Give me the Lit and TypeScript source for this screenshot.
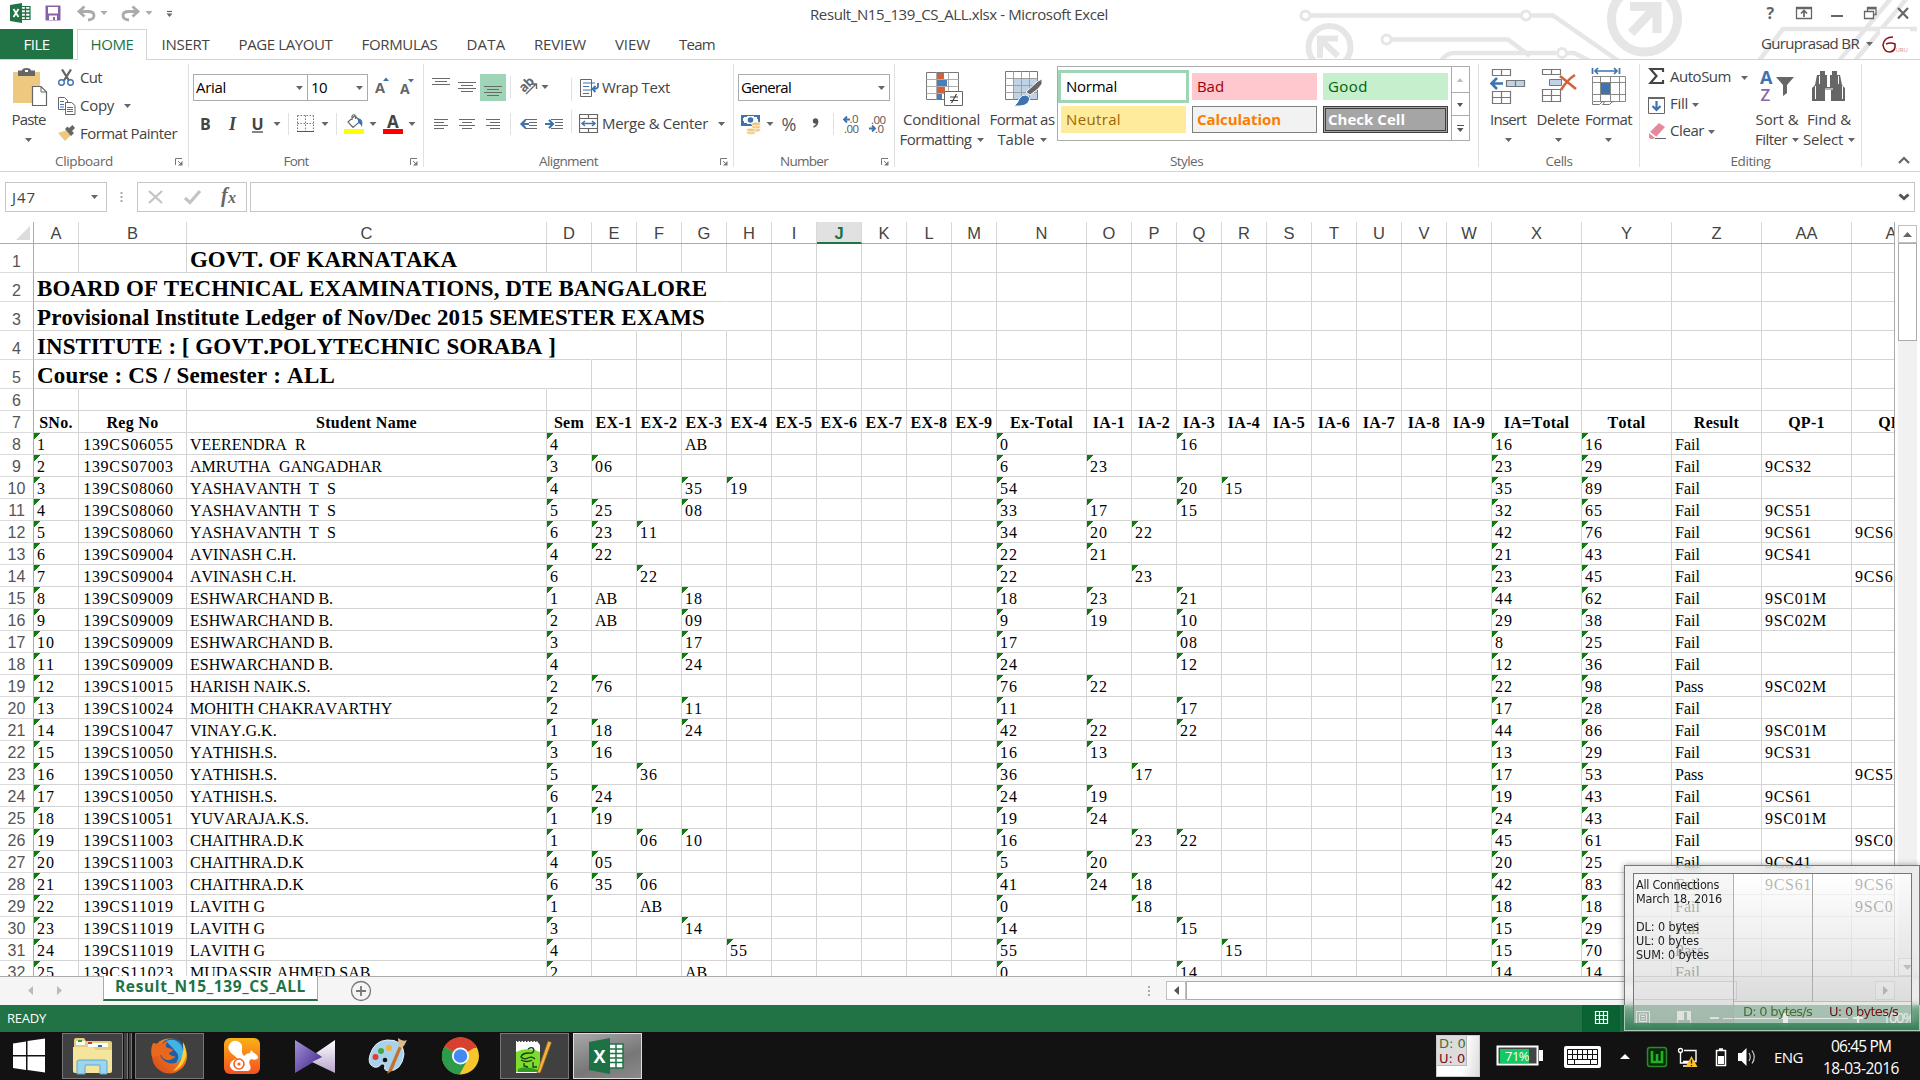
import { LitElement, html, svg, css, nothing } from "lit";
import { customElement, property } from "lit/decorators.js";

/** Single-line label that spreads its letters so the text spans `w` pixels. */
@customElement("fit-label")
class FitLabel extends LitElement {
  @property({ type: Number }) w = 0;
  static styles = css`
    :host { display: inline-block; white-space: pre; }
  `;
  render() {
    return html`<slot></slot>`;
  }
  firstUpdated() {
    const n = (this.textContent ?? "").length;
    const natural = this.getBoundingClientRect().width;
    if (this.w && n) this.style.letterSpacing = `${((this.w - natural) / n).toFixed(3)}px`;
  }
}

const t = (text: string, w: number) => html`<fit-label .w=${w}>${text}</fit-label>`;

/** Icon whose drawing uses window coordinates; x/y is the top-left corner of the box. */
const ic = (x: number, y: number, w: number, h: number, body: unknown) =>
  html`<svg class="ic" width=${w} height=${h} viewBox="${x} ${y} ${w} ${h}">${body}</svg>`;

const dd = () => html`<svg class="ic" width="7" height="4" viewBox="0 0 7 4"><path d="M0 0h7L3.5 4z" fill="#666" /></svg>`;
const tri = (x: number, y: number, c = "#666") => svg`<path d="M${x - 3.5} ${y - 2}h7l-3.5 4z" fill=${c} />`;
const hl = (rows: number[][], c = "#6a6a6a") =>
  svg`<path fill="none" stroke=${c} stroke-width="1.2" d=${rows.map(([x1, x2, y]) => `M${x1} ${y + 0.5}H${x2}`).join("")} />`;

const COLS: [string, number][] = [
  ["A", 45], ["B", 108], ["C", 360], ["D", 45], ["E", 45], ["F", 45], ["G", 45], ["H", 45], ["I", 45], ["J", 45],
  ["K", 45], ["L", 45], ["M", 45], ["N", 90], ["O", 45], ["P", 45], ["Q", 45], ["R", 45], ["S", 45], ["T", 45],
  ["U", 45], ["V", 45], ["W", 45], ["X", 90], ["Y", 90], ["Z", 90], ["AA", 90], ["AB", 90],
];

const TITLES: { row: number; col: string; text: string; w: number; spill: string }[] = [
  { row: 1, col: "C", text: "GOVT. OF KARNATAKA", w: 267, spill: "" },
  { row: 2, col: "A", text: "BOARD OF TECHNICAL EXAMINATIONS, DTE BANGALORE", w: 670, spill: "ABCDEFG" },
  { row: 3, col: "A", text: "Provisional Institute Ledger of Nov/Dec 2015 SEMESTER EXAMS", w: 668, spill: "ABCDEFG" },
  { row: 4, col: "A", text: "INSTITUTE : [ GOVT.POLYTECHNIC SORABA ]", w: 519, spill: "ABCD" },
  { row: 5, col: "A", text: "Course : CS / Semester : ALL", w: 298, spill: "ABC" },
];

const HEADS: Record<string, string> = {
  A: "SNo.", B: "Reg No", C: "Student Name", D: "Sem", E: "EX-1", F: "EX-2", G: "EX-3", H: "EX-4", I: "EX-5",
  J: "EX-6", K: "EX-7", L: "EX-8", M: "EX-9", N: "Ex-Total", O: "IA-1", P: "IA-2", Q: "IA-3", R: "IA-4", S: "IA-5",
  T: "IA-6", U: "IA-7", V: "IA-8", W: "IA-9", X: "IA=Total", Y: "Total", Z: "Result", AA: "QP-1", AB: "QP-2",
};

const ROWS: Record<string, string>[] = [
  "139CS06055|VEERENDRA  R|4|G:AB|N:0|Q:16|X:16|Y:16|Z:Fail",
  "139CS07003|AMRUTHA  GANGADHAR|3|E:06|N:6|O:23|X:23|Y:29|Z:Fail|AA:9CS32",
  "139CS08060|YASHAVANTH  T  S|4|G:35|H:19|N:54|Q:20|R:15|X:35|Y:89|Z:Fail",
  "139CS08060|YASHAVANTH  T  S|5|E:25|G:08|N:33|O:17|Q:15|X:32|Y:65|Z:Fail|AA:9CS51",
  "139CS08060|YASHAVANTH  T  S|6|E:23|F:11|N:34|O:20|P:22|X:42|Y:76|Z:Fail|AA:9CS61|AB:9CS62",
  "139CS09004|AVINASH C.H.|4|E:22|N:22|O:21|X:21|Y:43|Z:Fail|AA:9CS41",
  "139CS09004|AVINASH C.H.|6|F:22|N:22|P:23|X:23|Y:45|Z:Fail|AB:9CS62",
  "139CS09009|ESHWARCHAND B.|1|E:AB|G:18|N:18|O:23|Q:21|X:44|Y:62|Z:Fail|AA:9SC01M",
  "139CS09009|ESHWARCHAND B.|2|E:AB|G:09|N:9|O:19|Q:10|X:29|Y:38|Z:Fail|AA:9SC02M",
  "139CS09009|ESHWARCHAND B.|3|G:17|N:17|Q:08|X:8|Y:25|Z:Fail",
  "139CS09009|ESHWARCHAND B.|4|G:24|N:24|Q:12|X:12|Y:36|Z:Fail",
  "139CS10015|HARISH NAIK.S.|2|E:76|N:76|O:22|X:22|Y:98|Z:Pass|AA:9SC02M",
  "139CS10024|MOHITH CHAKRAVARTHY|2|G:11|N:11|Q:17|X:17|Y:28|Z:Fail",
  "139CS10047|VINAY.G.K.|1|E:18|G:24|N:42|O:22|Q:22|X:44|Y:86|Z:Fail|AA:9SC01M",
  "139CS10050|YATHISH.S.|3|E:16|N:16|O:13|X:13|Y:29|Z:Fail|AA:9CS31",
  "139CS10050|YATHISH.S.|5|F:36|N:36|P:17|X:17|Y:53|Z:Pass|AB:9CS52",
  "139CS10050|YATHISH.S.|6|E:24|N:24|O:19|X:19|Y:43|Z:Fail|AA:9CS61",
  "139CS10051|YUVARAJA.K.S.|1|E:19|N:19|O:24|X:24|Y:43|Z:Fail|AA:9SC01M",
  "139CS11003|CHAITHRA.D.K|1|F:06|G:10|N:16|P:23|Q:22|X:45|Y:61|Z:Fail|AB:9SC02",
  "139CS11003|CHAITHRA.D.K|4|E:05|N:5|O:20|X:20|Y:25|Z:Fail|AA:9CS41",
  "139CS11003|CHAITHRA.D.K|6|E:35|F:06|N:41|O:24|P:18|X:42|Y:83|Z:Fail|AA:9CS61|AB:9CS62",
  "139CS11019|LAVITH G|1|F:AB|N:0|P:18|X:18|Y:18|Z:Fail|AB:9SC02",
  "139CS11019|LAVITH G|3|G:14|N:14|Q:15|X:15|Y:29|Z:Fail",
  "139CS11019|LAVITH G|4|H:55|N:55|R:15|X:15|Y:70|Z:Pass",
  "139CS11023|MUDASSIR AHMED SAB|2|G:AB|N:0|Q:14|X:14|Y:14|Z:Fail",
].map((line, i) => {
  const [reg, name, sem, ...rest] = line.split("|");
  const row: Record<string, string> = { A: String(i + 1), B: reg, C: name, D: sem };
  for (const part of rest) {
    const [k, v] = part.split(":");
    row[k] = v;
  }
  return row;
});

@customElement("xl-sheet")
class XlSheet extends LitElement {
  static styles = css`
    :host { display: block; width: 1895px; height: 754px; overflow: hidden; border-right: 1px solid #ababab; font: 16px "Liberation Serif", serif; font-kerning: none; color: #000; box-sizing: border-box; }
    .row { display: flex; width: 1990px; height: 22px; }
    .tall { height: 29px; }
    .heads { font: 16.5px/22px "Liberation Sans", Arial, sans-serif; color: #444; border-bottom: 1px solid #ababab; height: 21px; box-sizing: content-box; }
    .col, .num, .cell { box-sizing: border-box; flex: none; overflow: hidden; }
    .col { text-align: center; border-right: 1px solid #d8d8d8; }
    .corner { width: 34px; flex: none; border-right: 1px solid #ababab; box-sizing: border-box; display: flex; align-items: flex-end; justify-content: flex-end; padding: 0 3px 3px 0; }
    .sel { background: #e1e1e1; color: #217346; font-weight: bold; height: 22px; border-bottom: 2px solid #217346; }
    .num { width: 34px; font: 16px/23px "Liberation Sans", Arial, sans-serif; color: #555; text-align: center; border-right: 1px solid #ababab; border-bottom: 1px solid #dcdcdc; }
    .tall .num { line-height: 35px; }
    .cell { border-right: 1px solid #d4d4d4; border-bottom: 1px solid #d4d4d4; line-height: 23px; padding-left: 3px; white-space: pre; }
    .digits { letter-spacing: 0.9px; }
    .code { letter-spacing: 0.7px; }
    .mid { text-align: center; padding: 0 8px 0 0; }
    .bold { font-weight: bold; letter-spacing: 0.3px; text-align: center; padding-left: 0; }
    .flag { background: linear-gradient(135deg, #107c10 0 4.7px, transparent 4.900px) no-repeat; }
    .open { border-right-color: transparent; }
    .title { font-weight: bold; font-size: 23px; line-height: 32px; overflow: visible; }
  `;

  private cell(col: string, w: number, cls: string, content: unknown) {
    return html`<div class="cell ${cls}" style="width:${w}px">${content}</div>`;
  }

  private dataCell(col: string, w: number, v: string | undefined) {
    if (v === undefined) return this.cell(col, w, "", nothing);
    const numeric = /^\d+$/.test(v);
    const cls = numeric ? "digits flag" : col === "B" ? "code mid" : col.startsWith("A") ? "code" : "";
    return this.cell(col, w, cls, v);
  }

  render() {
    return html`
      <div class="row heads">
        <div class="corner"><svg width="14" height="14" viewBox="0 0 14 14"><path d="M14 0v14H0z" fill="#dcdcdc" /></svg></div>
        ${COLS.map(([c, w]) => html`<div class="col ${c === "J" ? "sel" : ""}" style="width:${w}px">${c}</div>`)}
      </div>
      ${TITLES.map(
        (d) => html`<div class="row tall"><div class="num">${d.row}</div>${COLS.map(([c, w]) =>
          this.cell(c, w, (d.col === c ? "title " : "") + (d.spill.includes(c) && c.length === 1 ? "open" : ""),
            d.col === c ? t(d.text, d.w) : nothing))}</div>`
      )}
      <div class="row"><div class="num">6</div>${COLS.map(([c, w]) => this.cell(c, w, "", nothing))}</div>
      <div class="row"><div class="num">7</div>${COLS.map(([c, w]) => this.cell(c, w, "bold", HEADS[c]))}</div>
      ${ROWS.map(
        (r, i) => html`<div class="row"><div class="num">${i + 8}</div>${COLS.map(([c, w]) => this.dataCell(c, w, r[c]))}</div>`
      )}
    `;
  }
}

const launcher = html`<svg class="launch" width="8" height="8" viewBox="0 0 8 8"><path d="M.5 7V.5H7M3 3l3.500 3.500" fill="none" stroke="#777" /><path d="M7.500 3v4.500H3z" fill="#777" /></svg>`;

const group = (w: number, label: string, lw: number, hasLauncher: boolean, body: unknown) => html`
  <section class="group" style="width:${w}px">
    <div class="body">${body}</div>
    <div class="caption"><span class="capname">${t(label, lw)}</span>${hasLauncher ? launcher : nothing}</div>
  </section>`;

const big = (w: number, icon: unknown, l1: string, w1: number, l2 = "", w2 = 0) => html`
  <div class="big" style="width:${w}px">
    ${icon}
    <div class="bl">${t(l1, w1)}</div>
    <div class="bl">${l2 ? t(l2, w2) : nothing}${dd()}</div>
  </div>`;

const sheetIcon = (x: number, y: number) => svg`
  <path d="M${x} ${y + 2}l12-2v20l-12-2z" fill="#217346" />
  <path d="M${x + 12} ${y + 3.500}h8v13h-8" fill="#fff" stroke="#217346" stroke-width="1.200" />
  <path d="M${x + 12} ${y + 6.500}h8M${x + 12} ${y + 10}h8M${x + 12} ${y + 13.500}h8M${x + 15.500} ${y + 4}v12" stroke="#217346" stroke-width="1.300" />
  <path d="M${x + 3.500} ${y + 6}l5 8M${x + 8.500} ${y + 6}l-5 8" stroke="#fff" stroke-width="1.800" />`;

@customElement("app-root")
class AppRoot extends LitElement {
  static styles = css`
    :host { display: block; position: relative; width: 1920px; height: 1080px; overflow: hidden; background: #fff; color: #444; font: 15px "Open Sans", "Noto Sans", sans-serif; }
    svg { display: block; flex: none; }
    .deco { position: absolute; left: 1290px; top: 0; }
    .titlebar { height: 29px; display: flex; position: relative; }
    .qat { width: 480px; flex: none; }
    .doctitle { flex: 1; text-align: center; line-height: 28px; padding-right: 322px; }
    .tabs { height: 31px; display: flex; position: relative; border-bottom: 1px solid #d4d4d4; box-sizing: border-box; line-height: 30px; text-align: center; }
    .file { width: 73px; background: #217346; color: #fff; }
    .home { width: 70px; height: 31px; margin-left: 4px; box-sizing: border-box; border: 1px solid #d4d4d4; border-bottom: 0; background: #fff; color: #217346; line-height: 29px; }
    .user { margin-left: auto; display: flex; align-items: center; gap: 7px; padding-right: 10px; line-height: 27px; }
    .user fit-label { margin-top: -2px; }
    .ribbon { height: 112px; display: flex; border-bottom: 1px solid #d4d4d4; box-sizing: border-box; position: relative; background: #fff; }
    .group { margin-top: 4px; height: 103px; box-sizing: border-box; border-right: 1px solid #e1e1e1; flex: none; }
    .body { height: 87px; display: flex; }
    .group + .group .body { margin-left: -1px; }
    .caption { height: 16px; display: flex; line-height: 20px; font-size: 13.5px; color: #666; }
    .capname { flex: 1; text-align: center; }
    .launch { margin: 7px 5px 0 7px; }
    .big { display: flex; flex-direction: column; align-items: center; text-align: center; flex: none; }
    .bl { height: 20px; line-height: 18px; display: flex; align-items: center; justify-content: center; gap: 5px; }
    .bl fit-label { margin-top: -2px; }
    .stack { display: flex; flex-direction: column; padding-left: 1px; }
    .line { display: flex; align-items: center; height: 28px; gap: 4px; }
    .line fit-label { margin-top: -3px; }
    .edits { padding-left: 1px; width: 112px; }
    .edits .line { height: 27px; }
    .copydd { margin-left: 6px; display: flex; }
    .rows { display: flex; flex-direction: column; }
    .r1 { display: flex; height: 27px; margin-top: 10px; }
    .r2 { display: flex; height: 27px; margin-top: 9px; }
    .combo { box-sizing: border-box; border: 1px solid #ababab; height: 27px; display: flex; align-items: center; justify-content: space-between; padding: 0 4px 0 2px; color: #000; background: #fff; }
    .combo fit-label { margin-top: -2px; }
    .cfont { width: 115px; margin-left: 5px; }
    .csize { width: 60px; border-left: 0; padding-left: 3px; }
    .cnum { width: 152px; margin-left: 5px; }
    .btntext { display: flex; align-items: center; gap: 3px; }
    .btntext fit-label { margin-top: -2px; }
    .tail { margin-left: 7px; display: flex; }
    .gap { flex: none; }
    .gallery { box-sizing: border-box; width: 413px; height: 75px; margin-top: 2px; border: 1px solid #ababab; display: flex; justify-content: space-between; }
    .styles { display: grid; grid-template-columns: 125px 125px 125px; grid-template-rows: 27px 27px; gap: 6px; padding: 6px 0 0 3px; }
    .st { box-sizing: border-box; line-height: 26px; padding-left: 5px; }
    .normal { color: #000; background: #fff; outline: 3px solid #9fd5b7; }
    .bad { background: #ffc7ce; color: #9c0006; }
    .good { background: #c6efce; color: #006100; }
    .neutral { background: #ffeb9c; color: #9c6500; }
    .calc { background: #f2f2f2; color: #fa7d00; font-weight: bold; border: 1px solid #7f7f7f; line-height: 25px; padding-left: 4px; }
    .check { background: #a5a5a5; color: #fff; font-weight: bold; border: 3px double #3f3f3f; line-height: 21px; padding-left: 2px; }
    .gscroll { width: 17px; border-left: 1px solid #ababab; display: flex; flex-direction: column; }
    .gscroll svg + svg { border-top: 1px solid #ababab; }
    .collapse { margin: 96px 0 0 36px; }
    .fbar { display: flex; height: 50px; box-sizing: border-box; padding-top: 10px; }
    .fbox { box-sizing: border-box; height: 30px; border: 1px solid #c6c6c6; display: flex; align-items: center; justify-content: space-between; background: #fff; }
    .name { width: 102px; margin-left: 5px; padding: 0 8px 0 6px; }
    .fx { width: 110px; }
    .input { width: 1665px; margin-left: 3px; justify-content: flex-end; }
    .main { display: flex; height: 754px; }
    .vscroll { width: 19px; margin-left: 3px; padding-top: 3px; display: flex; flex-direction: column; box-sizing: border-box; }
    .sbtn { box-sizing: border-box; border: 1px solid #c0c0c0; background: #fff; width: 19px; height: 18px; display: flex; align-items: center; justify-content: center; }
    .vthumb { box-sizing: border-box; border: 1px solid #ababab; background: #fff; height: 98px; }
    .vtrack { flex: 1; background: #f1f1f1; }
    .tabbar { height: 29px; box-sizing: border-box; border-top: 1px solid #ababab; background: #f5f5f5; display: flex; }
    .nav { width: 103px; height: 28px; }
    .sheettab { width: 215px; height: 25px; box-sizing: border-box; margin-top: -1px; background: #fff; border: 1px solid #ababab; border-top: 0; border-bottom: 2px solid #217346; color: #217346; font-weight: bold; line-height: 21px; text-align: center; font-size: 15.5px; }
    .hscroll { margin-left: auto; display: flex; height: 19px; margin-top: 4px; margin-right: 25px; }
    .hbtn { width: 20px; height: 19px; }
    .hthumb { box-sizing: border-box; width: 551px; border: 1px solid #ababab; background: #fff; }
    .htrack { width: 138px; background: #f1f1f1; }
    .status { height: 27px; background: #217346; color: #fff; display: flex; justify-content: space-between; line-height: 26px; padding-left: 7px; font-size: 13px; }
    .zoom { display: flex; margin-right: 2px; }
    .pct { color: #fff; font-size: 14px; width: 40px; line-height: 26px; text-align: center; }
    .taskbar { height: 48px; background: #121212; display: flex; }
    .app { box-sizing: border-box; height: 46px; margin-top: 1px; border: 1px solid #777; background: #404040; }
    .active { background: linear-gradient(160deg, #a8a8a8, #777 60%, #8a8a8a); border-color: #ddd; }
    .multi { height: 46px; margin-top: 1px; width: 3px; border-right: 1px solid #777; background: #404040; margin-left: 1px; }
    .meter { box-sizing: border-box; width: 44px; height: 42px; margin-top: 3px; background: linear-gradient(100deg, #fff 60%, #ddd); border: 1px solid #ccc; }
    .meterin { width: 30px; height: 30px; background: #dcdcdc; border: 1px solid #b8b8b8; border-width: 0 1px 1px 0; font: 13px/15px "DejaVu Sans", sans-serif; padding-left: 2px; box-sizing: border-box; white-space: nowrap; color: #4d6b36; }
    .up { color: #7a0d16; }
    .tray { margin-left: auto; display: flex; color: #fff; }
    .eng { line-height: 50px; margin-left: 14px; }
    .clock { width: 98px; margin-left: 9px; text-align: center; line-height: 22px; padding-top: 3px; font-size: 15.5px; }
    .glass { position: absolute; left: 1624px; top: 865px; width: 296px; height: 166px; box-sizing: border-box; border: 1px solid #777; background: rgba(225, 228, 226, 0.55); box-shadow: 0 0 6px rgba(0, 0, 0, 0.350); backdrop-filter: blur(3px); clip-path: polygon(evenodd, -8px -8px, 304px -8px, 304px 174px, -8px 174px, -8px -8px, 9px 8px, 287px 8px, 287px 158px, 9px 158px, 9px 8px); }
    .glassline { position: absolute; left: 1624px; top: 1005px; width: 296px; height: 26px; box-sizing: border-box; border: 1px solid #a9cbb7; border-top: 0; background: linear-gradient(rgba(33, 115, 70, 0.1), rgba(33, 115, 70, 0.8)); clip-path: polygon(0 0, 9px 0, 9px 18px, 287px 18px, 287px 0, 100% 0, 100% 100%, 0 100%); }
    .widget { position: absolute; left: 1633px; top: 873px; width: 279px; height: 151px; box-sizing: border-box; border: 1px solid #777; display: flex; font: 13px/14px "DejaVu Sans", sans-serif; color: #222; }
    .info { width: 100px; background: linear-gradient(rgba(244, 244, 244, 0.72), rgba(212, 212, 212, 0.72)); border-right: 1px solid #b0b0b0; box-sizing: border-box; padding: 4px 0 0 2px; white-space: nowrap; font: 12.5px/14px "DejaVu Sans Condensed", "DejaVu Sans", sans-serif; }
    .info p { margin: 0; height: 14px; }
    .info .sp { height: 28px; }
    .speeds { flex: 1; display: flex; flex-direction: column; }
    .charts { display: flex; height: 127px; background: linear-gradient(rgba(255, 255, 255, 0.72), rgba(212, 212, 212, 0.72)); }
    .chart { flex: 1; border-left: 1px solid #aaa; }
    .charts div:first-child { width: 78px; }
    .rates { flex: 1; border-top: 1px solid #bbb; background: rgba(222, 226, 222, 0.7); display: flex; line-height: 19px; padding-left: 9px; gap: 17px; color: #4d6b36; }
  `;

  private deco() {
    return html`<svg class="deco" width="630" height="59" viewBox="1290 0 630 59">
      <g fill="none" stroke="#e6e6e6" stroke-width="4.500">
        <path d="M1311 15.500H1521M1532 15.500H1553L1620 62M1392 39.500H1508L1530 56M1440 62Q1446 53 1454 53H1556M1567 53H1574L1592 62M1758 62L1783 29H1917M1838 62L1892 -3M1854 62L1908 -3" />
        <circle cx="1305.500" cy="15.500" r="4.500" stroke-width="3" /><circle cx="1526" cy="15.500" r="4.500" stroke-width="3" />
        <circle cx="1386.500" cy="39.500" r="4.500" stroke-width="3" /><circle cx="1562" cy="53" r="4.500" stroke-width="3" />
        <circle cx="1329.500" cy="47" r="21" stroke-width="6" />
        <circle cx="1644.500" cy="19" r="33" stroke-width="9" />
        <path d="M1320 58V38.500H1338M1321 40L1338 56" stroke-width="6" />
        <path d="M1630 6.500H1657V33M1656 7L1631 33" stroke-width="9" />
      </g>
    </svg>`;
  }

  private title() {
    return html`<div class="titlebar">
      <div class="qat">${ic(0, 0, 480, 29, svg`
        ${sheetIcon(10, 3)}
        <path d="M45.500 5.500h15v15h-15z" fill="#8660a9" /><path d="M48 7h10v6.500H48z" fill="#fff" /><path d="M49 15.500h8V20h-2v-3h-2v3h-4z" fill="#fff" />
        <g fill="none" stroke="#ababab" stroke-width="2.800"><path d="M80 11.500h8q6 0 6 4t-6 4.500" /><path d="M84.500 6.500l-5.500 5 5.500 5" />
        <path d="M137 11.500h-8q-6 0-6 4t6 4.500" /><path d="M132.500 6.500l5.500 5-5.500 5" /></g>
        ${tri(104, 13, "#ababab")}${tri(149, 13, "#ababab")}
        <path d="M167 11.500h5" stroke="#666" stroke-width="1.200" /><path d="M166.500 13.500h6l-3 3.500z" fill="#666" />`)}</div>
      <div class="doctitle">${t("Result_N15_139_CS_ALL.xlsx - Microsoft Excel", 298)}</div>
      ${ic(1760, 0, 160, 29, svg`<g fill="none" stroke="#666" stroke-width="1.800">
        <text x="1766.500" y="19" font-size="16" font-weight="bold" fill="#666" stroke="none">?</text>
        <path d="M1796.500 7.500h15v11h-15z" stroke-width="1.300" /><path d="M1796 8.500h16" stroke-width="1.500" /><path d="M1804 17v-6M1801 13.500l3-3 3 3" stroke-width="1.700" />
        <path d="M1831 16h12" stroke-width="2" />
        <path d="M1864.500 11.500h9v7h-9zM1867.500 11V7.500h8.500v7h-2.500" stroke-width="1.300" /><path d="M1867 8.500h9" />
        <path d="M1898 8l10 10.500M1908 8l-10 10.500" stroke-width="2.200" /></g>`)}
    </div>`;
  }

  private tabs() {
    const tab = (label: string, w: number, box: number) => html`<div style="width:${box}px">${t(label, w)}</div>`;
    return html`<div class="tabs">
      <div class="file">${t("FILE", 26)}</div>
      <div class="home">${t("HOME", 43)}</div>
      ${tab("INSERT", 48, 77)}${tab("PAGE LAYOUT", 94, 123)}${tab("FORMULAS", 76, 105)}${tab("DATA", 39, 68)}${tab("REVIEW", 52, 80)}${tab("VIEW", 35, 65)}${tab("Team", 36, 64)}
      <div class="user">${t("Guruprasad BR", 98)}${dd()}${ic(1880, 29, 30, 30, svg`<path d="M1880 29h30v30h-30z" fill="#fff" />
        <path d="M1893 37q-9 0-10 8 1 7 7 7 6-1 5-8-4-2-9 0" fill="none" stroke="#8c1418" stroke-width="1.600" /><text x="1895.500" y="52" font-size="6" fill="#d88">URU</text>`)}</div>
    </div>`;
  }

  private ribbon() {
    const sep = (x: number, y1: number, y2: number) => svg`<path d="M${x + 0.5} ${y1}V${y2}" stroke="#e1e1e1" />`;
    const clip = html`
      ${big(57, ic(9, 64, 44, 46, svg`
        <path d="M15 72h27v31H15z" fill="#edc87e" /><path d="M20 76v-5.500h4q0-2.500 4.500-2.500t4.500 2.500h4V76z" fill="#666" /><path d="M27 71h3" stroke="#fff" stroke-width="2" />
        <path d="M34.500 86.500h8.500l5.500 5.500v13.500h-14z" fill="#fff" stroke="#666" stroke-width="1.200" /><path d="M43 86.500V92h5.500" fill="none" stroke="#666" />`), "Paste", 34)}
      <div class="stack">
        <div class="line">${ic(58, 69, 18, 18, svg`<path d="M62 69.500l7 11M71 69.500l-7 11" stroke="#666" stroke-width="2.300" /><circle cx="61.500" cy="82.500" r="2.800" fill="none" stroke="#3f73ae" stroke-width="1.400" /><circle cx="70.500" cy="82.500" r="2.800" fill="none" stroke="#3f73ae" stroke-width="1.400" />`)}${t("Cut", 22)}</div>
        <div class="line">${ic(58, 96, 18, 18, svg`<g fill="#fff" stroke="#666"><path d="M58.500 96.500h6l3 3v9h-9z" /><path d="M65.500 101.500h6l3.500 3v9h-9.500z" /></g><path d="M60 100.500h4M60 103.500h4M60 106h4M67 106.500h6M67 108.500h6M67 110.500h6" stroke="#3f73ae" />`)}${t("Copy", 34)}<span class="copydd">${dd()}</span></div>
        <div class="line">${ic(58, 125, 18, 18, svg`<path d="M58 133l9-3 4 5-6 6z" fill="#edc87e" /><path d="M65 129l6 7 3-3-2-2 3-3-2.500-3-3.500 3-1.500-1.500z" fill="#666" />`)}${t("Format Painter", 97)}</div>
      </div>`;
    const font = html`<div class="rows">
      <div class="r1"><div class="combo cfont">${t("Arial", 30)}${dd()}</div><div class="combo csize">${t("10", 16)}${dd()}</div>
        ${ic(368, 74, 50, 27, svg`<g fill="#666" font-weight="bold" font-size="14.500"><text x="375" y="93">A</text><text x="400" y="94" font-size="14">A</text></g><path d="M383 81l3-3.500 3 3.500zM408 79h6l-3 3.500z" fill="#3f73ae" />`)}</div>
      <div class="r2">${ic(188, 110, 234, 27, svg`
        <g fill="#444" font-weight="bold" font-size="16"><text x="200" y="130">B</text><text x="229" y="130" font-style="italic" font-family="Liberation Serif" font-size="18">I</text><text x="251.500" y="129.500">U</text></g>
        <path d="M252 132h11" stroke="#444" stroke-width="1.300" />${tri(277, 124)}${sep(288, 113, 135)}
        <path d="M297.500 115.500h16M297.500 123.500h16M297.500 115.500v16M305.500 115.500v16M313.500 115.500v16" stroke="#777" stroke-width="1" stroke-dasharray="1.500 1.500" /><path d="M297 131.500h17" stroke="#555" />${tri(325, 124)}${sep(336, 113, 135)}
        <path d="M344 129h20v5h-20z" fill="#ff0" /><path d="M348 122l7-6.500 5 6-7 6zM352 120v-4q1.500-2.500 3.500 0v3" fill="none" stroke="#666" stroke-width="1.200" /><path d="M358 118q6 1 4 9-2-4-4-4z" fill="#3f73ae" />${tri(373, 124)}
        <path d="M383 129h20v5h-20z" fill="red" /><text x="387" y="128" font-size="17" font-weight="bold" fill="#444">A</text>${tri(412, 124)}`)}</div>
    </div>`;
    const align = html`<div class="rows">
      <div class="r1">${ic(423, 74, 156, 27, svg`
        <path d="M480 74h26v27h-26z" fill="#9fd5b7" />
        ${hl([[432, 450, 78], [435, 447, 81], [432, 450, 84], [458, 476, 82], [461, 473, 85], [458, 476, 88], [461, 473, 91], [484, 502, 86], [487, 499, 89], [484, 502, 92], [487, 499, 95]])}
        ${sep(510, 76, 98)}<text x="0" y="0" transform="translate(524,93) rotate(-45)" font-size="13" font-weight="bold" letter-spacing="-.6" fill="#666">ab</text><path d="M526 94l10-10M531.500 84h5v5" fill="none" stroke="#666" stroke-width="1.400" />${tri(545, 87)}${sep(571, 78, 101)}`)}
        <div class="btntext">${ic(579, 76, 20, 22, svg`<path d="M580.500 78.500h11v17h-11z" fill="#fff" stroke="#666" /><path d="M583 82h12M583 85.500h6M583 89h9M583 92.500h6" stroke="#3f73ae" stroke-width="1.200" /><path d="M598 82v3q0 3-5 3M595.500 85l-3 3 3 3" fill="none" stroke="#3f73ae" stroke-width="1.800" />`)}${t("Wrap Text", 68)}</div></div>
      <div class="r2">${ic(423, 110, 156, 27, svg`
        ${hl([[434, 448, 119], [434, 444, 122], [434, 448, 125], [434, 444, 128], [459, 475, 119], [462, 472, 122], [459, 475, 125], [462, 472, 128], [486, 500, 119], [490, 500, 122], [486, 500, 125], [490, 500, 128]])}
        ${sep(510, 113, 135)}${hl([[525, 537, 119], [529, 537, 122], [529, 537, 125], [525, 537, 128], [551, 563, 119], [555, 563, 122], [555, 563, 125], [551, 563, 128]])}
        <path d="M529 124h-6M525.500 120l-4 4 4 4M545 124h7M549 120l4 4-4 4" fill="none" stroke="#3f73ae" stroke-width="2.200" />${sep(571, 110, 133)}`)}
        <div class="btntext">${ic(579, 113, 20, 21, svg`<path d="M579.500 114.500h18v18h-18zM579.500 118.500h18M579.500 128.500h18M588.500 114.500v4M588.500 128.500v4" fill="none" stroke="#666" stroke-width="1.200" /><path d="M583 123.500h11M585 121l-3 2.500 3 2.500M592 121l3 2.500-3 2.500" fill="none" stroke="#3f73ae" stroke-width="1.500" />`)}${t("Merge & Center", 106)}<span class="tail">${dd()}</span></div></div>
    </div>`;
    const num = html`<div class="rows">
      <div class="r1"><div class="combo cnum">${t("General", 50)}${dd()}</div></div>
      <div class="r2">${ic(733, 110, 158, 27, svg`
        <path d="M741 115h19v11h-19z" fill="#3f73ae" /><path d="M744 117h3v-1h7v1h3v2h1v3h-4v2h-7v-1h-3v-2h-1v-3h1z" fill="#fff" /><circle cx="750.500" cy="120" r="2.800" fill="#3f73ae" />
        <g fill="#edc87e" stroke="#fff" stroke-width=".8"><ellipse cx="756" cy="130" rx="4.500" ry="2" /><ellipse cx="756" cy="127" rx="4.500" ry="2" /><ellipse cx="756" cy="124" rx="4.500" ry="2" /><ellipse cx="751" cy="132.500" rx="4.500" ry="2" /><ellipse cx="751" cy="130" rx="4.500" ry="2" /></g>
        ${tri(770, 124)}<text x="781.500" y="130.500" font-size="18" fill="#555">%</text><circle cx="815.500" cy="121" r="2.700" fill="#555" /><path d="M817.500 121q.5 4-4 6" fill="none" stroke="#555" stroke-width="1.600" />
        ${sep(833, 113, 135)}<g fill="#555" font-size="11.500" letter-spacing="-.6"><text x="849.500" y="123">.0</text><text x="844" y="132.500">.00</text><text x="871" y="123.500">.00</text><text x="875" y="132.500">.0</text></g>
        <path d="M850 119.500h-5M847 116.500l-3 3 3 3M869 128.500h5M872 125.500l3 3-3 3" fill="none" stroke="#3f73ae" stroke-width="1.800" />`)}</div>
    </div>`;
    const styles = html`<span class="gap" style="width:2px"></span>
      ${big(91, ic(919, 64, 46, 46, svg`<path d="M926.500 72.500h32v27h-32z" fill="#fff" stroke="#777" /><path d="M937 73h7v6h-7zM937 87h8v6h-8z" fill="#d2613c" /><path d="M937 80h10v6h-10zM937 94h5v6h-5z" fill="#4a7ebb" />
        <path d="M926 79.500h33M926 86.500h33M926 93.500h33M936.500 72v28M948.500 72v28" stroke="#999" stroke-width=".8" /><path d="M944.500 91.500h18v14h-18z" fill="#fff" stroke="#666" /><path d="M950 97h8M950 100.500h8M956.500 94l-5 9" stroke="#444" stroke-width="1.200" />`), "Conditional", 77, "Formatting", 72)}
      ${big(70, ic(999, 64, 46, 46, svg`<path d="M1005.500 71.500h32v28h-32z" fill="#fff" stroke="#777" /><path d="M1013 78h24v21h-24z" fill="#c0d2e6" /><path d="M1005 78.500h33M1005 85.500h33M1005 92.500h33M1013.500 71v29M1021.500 71v29M1029.500 71v29" stroke="#999" stroke-width=".9" />
        <path d="M1026 92l12-11 4-2v5l-4 5-8 6z" fill="#666" stroke="#fff" /><path d="M1014 106q4-3 5-7 3-5 7-4 5 2 3 6-2 6-15 5z" fill="#3f73ae" stroke="#fff" />`), "Format as", 65, "Table", 37)}
      <div class="gallery"><div class="styles">
        <div class="st normal">${t("Normal", 51)}</div><div class="st bad">${t("Bad", 27)}</div><div class="st good">${t("Good", 40)}</div>
        <div class="st neutral">${t("Neutral", 55)}</div><div class="st calc">${t("Calculation", 84)}</div><div class="st check">${t("Check Cell", 77)}</div>
      </div><div class="gscroll">
        ${ic(0, 0, 17, 25, svg`<path d="M5 15h6l-3-4z" fill="#bbb" />`)}${ic(0, 0, 17, 22, svg`<path d="M5 10h6l-3 4z" fill="#555" />`)}${ic(0, 0, 17, 24, svg`<path d="M5 9.500h7" stroke="#555" /><path d="M5 12h6.500l-3.200 4z" fill="#555" />`)}
      </div></div>`;
    const cells = html`<span class="gap" style="width:5px"></span>
      ${big(50, ic(1485, 64, 46, 46, svg`<path d="M1492.500 69.500h18v6h-18zM1501.500 69v7M1492.500 91.500h18v12h-18zM1492 97.500h19M1501.500 91v13" fill="#fff" stroke="#777" stroke-width="1.200" /><path d="M1506.500 80.500h18v6h-18zM1515.500 80v7" fill="#c0d2e6" stroke="#777" stroke-width="1.200" /><path d="M1503 83.500h-11M1497 78l-5.500 5.500 5.500 5.500" fill="none" stroke="#3f73ae" stroke-width="2.600" />`), "Insert", 36)}
      ${big(50, ic(1535, 64, 46, 46, svg`<path d="M1542.500 69.500h18v5h-18zM1551.500 69v6M1542.500 89.500h18v12h-18zM1542 95.500h19M1551.500 89v13" fill="#fff" stroke="#777" stroke-width="1.200" /><path d="M1549.500 79.500h12v6h-12z" fill="#c0d2e6" stroke="#777" /><path d="M1560 76l16 13M1575 75q-8 5-14 15" fill="none" stroke="#d2613c" stroke-width="2.600" />`), "Delete", 43)}
      ${big(51, ic(1586, 64, 46, 46, svg`<path d="M1592.500 68v6M1619.500 68v6M1595 71h22M1598 68l-3 3 3 3M1614 68l3 3-3 3" fill="none" stroke="#3f73ae" stroke-width="1.700" /><path d="M1592.500 76.500h33v25h-33zM1592 82.500h33M1592 94.500h33M1600.500 76v25M1610.500 76v25M1619.500 76v25" fill="#fff" stroke="#888" /><path d="M1601 83h9v11h-9z" fill="#3f73ae" /><path d="M1592.500 102v2.500h7q3-4 5-3-1 3-2 3h7q3-4 5-3" fill="none" stroke="#777" />`), "Format", 47)}`;
    const edit = html`
      <div class="stack edits">
        <div class="line">${ic(1640, 67, 26, 22, svg`<path d="M1663 72v-3h-12.500l6 7-6 7H1663v-3" fill="none" stroke="#444" stroke-width="2.200" />`)}${t("AutoSum", 61)}<span class="copydd">${dd()}</span></div>
        <div class="line">${ic(1640, 92, 26, 22, svg`<path d="M1648.500 95.500h16v16h-16z" fill="#fff" stroke="#666" /><path d="M1648 96h17" stroke="#666" stroke-width="2" /><path d="M1656.500 99v8M1652.500 104l4 4 4-4" fill="none" stroke="#3f73ae" stroke-width="2.200" />`)}${t("Fill", 18)}${dd()}</div>
        <div class="line">${ic(1640, 120, 26, 22, svg`<path d="M1650 131l9-9 6 4-9 10z" fill="#e58a9c" /><path d="M1649 132l6 5q-3 2-6 0z" fill="#e58a9c" /><path d="M1649.500 131l7 5.500" stroke="#fff" /><path d="M1655 137.500h11" stroke="#666" />`)}${t("Clear", 34)}${dd()}</div>
      </div>
      ${big(50, ic(1754, 64, 46, 46, svg`<g font-size="18" font-weight="bold"><text x="1760" y="84" fill="#3f73ae">A</text><text x="1760.500" y="101" fill="#8e63ab" font-weight="600" font-size="17">Z</text></g><path d="M1776 77h18l-7 8v8l-4 3v-11z" fill="#666" />`), "Sort &", 43, "Filter", 32)}
      ${big(54, ic(1806, 64, 46, 46, svg`<path d="M1812 101V88l3-3 2-10h3v-4h5v4h2v12h3V75h2v-4h5v4h3l2 10 3 3v13h-14V90h-6v11z" fill="#666" /><path d="M1815.500 86v13M1842.500 86v13M1819.500 76v8M1838.500 76v8M1825 89h8" stroke="#fff" stroke-width="1" />`), "Find &", 44, "Select", 40)}`;
    return html`<div class="ribbon">
      ${group(189, "Clipboard", 58, true, clip)}${group(235, "Font", 25, true, font)}${group(310, "Alignment", 59, true, align)}
      ${group(161, "Number", 48, true, num)}${group(584, "Styles", 33, false, styles)}${group(161, "Cells", 27, false, cells)}${group(222, "Editing", 40, false, edit)}
      <svg class="collapse" width="12" height="8" viewBox="0 0 12 8"><path d="M1 7l5-5 5 5" fill="none" stroke="#666" stroke-width="2.200" /></svg>
    </div>`;
  }

  private taskbar() {
    return html`<div class="taskbar">
      ${ic(0, 1032, 62, 48, svg`<path d="M13 1043.500l13-2v13.500H13zM27.500 1041l17.500-2.500V1055H27.500zM13 1056.500h13v13.500l-13-2zM27.500 1056.500H45v16l-17.500-2.500z" fill="#fff" />`)}
      <div class="app" style="width:61px">${ic(63, 1034, 59, 44, svg`<path d="M74 1040q0-2 2-2h8l2 3h24q2 0 2 2v27H74z" fill="#e3cf7d" /><path d="M76 1041h9v4h-9zM88 1043h20v4H88z" fill="#fff" /><path d="M78 1040h4v2h-4z" fill="#3a9b46" /><path d="M88 1042h4v2h-4z" fill="#c33" /><path d="M98 1045h4v2h-4z" fill="#36c" /><path d="M73 1047h20l3 3h16v21q0 2-2 2H75q-2 0-2-2z" fill="#f5e59c" /><path d="M77 1074v-12q0-2 2-2h26q2 0 2 2v12h-7v-8q0-1-1-1H86q-1 0-1 1v8z" fill="#9dd5ee" stroke="#5aa7cc" />`)}</div>
      <div class="multi"></div><div class="multi" style="width:2px"></div><span class="gap" style="width:3px"></span>
      <div class="app" style="width:69px">${ic(136, 1034, 67, 44, svg`<defs><linearGradient id="fx" x1="0" y1="1" x2="1" y2="0"><stop stop-color="#d8431c" /><stop offset=".6" stop-color="#ee7a1e" /><stop offset="1" stop-color="#fbcf33" /></linearGradient></defs>
        <circle cx="169.500" cy="1056" r="17.500" fill="url(#fx)" /><circle cx="172" cy="1051" r="12.500" fill="#1f5fa6" /><path d="M166 1041q9-4 15 4 4 7 1 13-3 4-6 5 4-6 1-10-5-6-11-12z" fill="#43b2e4" />
        <path d="M153 1043q-3 7-1 14l9-2q3 6 9 5 4-2 6-3-5-1-7-3 0-2 4-3 0-2-5-3-3-1-2-4 1-2 3-3-4 0-7 3-5 0-9-1z" fill="#e8691d" /><path d="M183 1042q5 8 2 17-4 10-12 12 7-6 9-14 2-7 1-15z" fill="#fbd23c" />`)}</div>
      ${ic(204, 1032, 296, 48, svg`<defs><linearGradient id="uc" x2="0" y2="1"><stop stop-color="#fbb117" /><stop offset="1" stop-color="#f4501e" /></linearGradient><linearGradient id="kp" x2="1" y2="1"><stop stop-color="#a493d6" /><stop offset="1" stop-color="#3c1e8a" /></linearGradient><linearGradient id="kr" x2="0" y2="1"><stop stop-color="#fff" /><stop offset="1" stop-color="#b7a4cc" /></linearGradient></defs>
        <rect x="224" y="1038" width="36" height="36" rx="6" fill="url(#uc)" />
        <path d="M238 1059q-3-3-7-6-4-4-2-8 3-5 8-4 6 2 5 8-1 4 2 7 3-3 6-3l1-3 3 3q4 2 4 5-2 3-7 1-3 2-1 6 2 5-2 6h-13q-6-2-5-7 2-5 8-5z" fill="#fff" /><circle cx="239" cy="1064" r="5" fill="#fff" stroke="#f4601e" stroke-width="1.600" /><circle cx="239" cy="1064" r="1.600" fill="#f4601e" />
        <path d="M295 1040l27 17-27 16z" fill="url(#kp)" /><path d="M335 1040l-19 13 6 4-10 5 23 11z" fill="url(#kr)" />
        <path d="M387 1040q16-1 17 14-2 17-16 17-5-1-3-5 0-3-4-2-2 4-7 3-7-3-4-12 4-14 17-15z" fill="#a9d3ec" stroke="#e6f3fb" /><circle cx="375.500" cy="1057" r="3" fill="#e03c31" /><circle cx="381" cy="1051" r="3" fill="#43a843" /><circle cx="389" cy="1048" r="3" fill="#f4b22d" /><circle cx="385" cy="1060" r="2.300" fill="#141414" />
        <path d="M387 1074l12-28 3 1-10 24z" fill="#c6702c" /><path d="M399 1047q-1-5-1-9 5 4 9 2-2 5-5 8z" fill="#dcb98c" />
        <circle cx="460.500" cy="1056" r="18.500" fill="#f6c62c" /><path d="M460.500 1056L444.500 1046.500a18.500 18.500 0 0 1 32 0z" fill="#d8402f" /><path d="M444.500 1046.500a18.500 18.500 0 0 0 15 28l8-14.500-7-4z" fill="#2c9c4b" /><path d="M444.500 1046.500q16-17 32.500 1.500h-17z" fill="#d8402f" /><circle cx="460.500" cy="1056" r="8.500" fill="#fff" /><circle cx="460.500" cy="1056" r="6.800" fill="#4688f1" />`)}
      <div class="app" style="width:69px">${ic(501, 1034, 67, 44, svg`<path d="M516 1041h21l3 4v28h-24z" fill="#fff" /><path d="M517 1041h20" stroke="#444" stroke-width="2" stroke-dasharray="1.500 1.500" /><path d="M516 1052q12-6 24 0v20h-24z" fill="#7ddc2e" /><path d="M518 1069q8-4 20 1v2h-20z" fill="#2f9d1d" />
        <path d="M528 1049q5-3 6 1-1 4-5 3-7 0-8 4 3 3 7 1t7 1M521 1060q6 3 11 0M524 1063v3l4 1M533 1062v5h4" fill="none" stroke="#1d3b16" stroke-width="1.300" /><path d="M537 1073l11-32 3.500 1.500-11 30z" fill="#f0b43a" stroke="#8b5a1c" stroke-width=".7" />`)}</div>
      <span class="gap" style="width:4px"></span>
      <div class="app active" style="width:69px">${ic(574, 1034, 67, 44, svg`<path d="M609 1044h14v24h-14z" fill="#fff" stroke="#217346" stroke-width="1.500" /><path d="M609 1049h14M609 1053.500h14M609 1058h14M609 1062.500h14M616 1044v24" stroke="#217346" stroke-width="1.500" /><path d="M589 1042l21-4v36l-21-4z" fill="#1e7145" /><text x="593.500" y="1062.500" font-size="18" font-weight="bold" fill="#fff">X</text>`)}</div>
      <div class="tray">
        <div class="meter"><div class="meterin">D: 0<div class="up">U: 0</div></div></div>
        ${ic(1480, 1032, 280, 48, svg`
          <rect x="1497.500" y="1046.500" width="40" height="18" fill="#444" stroke="#fff" stroke-width="2" /><path d="M1500 1049h29v14h-29z" fill="#14c864" /><path d="M1539 1050h4v11h-4z" fill="#fff" /><text x="1505" y="1061" font-size="13" letter-spacing="-.5" fill="#fff">71%</text>
          <rect x="1564" y="1046" width="37" height="22" rx="2" fill="#fff" /><path d="M1567.500 1049.500h30v15h-30zM1567 1054.500h31M1567 1059.500h31M1572.500 1049v11M1577.500 1049v11M1582.500 1049v11M1587.500 1049v11M1592.500 1049v11M1574.500 1060v5M1590.500 1060v5" fill="none" stroke="#111" />
          <path d="M1620 1059l5-5 5 5z" fill="#fff" />
          <rect x="1647.500" y="1047.500" width="19" height="19" rx="2.500" fill="#072b07" stroke="#2a8a2a" stroke-width="1.500" /><path d="M1652 1051v11h10v-11M1657 1054v7" fill="none" stroke="#25b125" stroke-width="2.600" />
          <circle cx="1680.500" cy="1050.500" r="2" fill="none" stroke="#fff" stroke-width="1.300" /><path d="M1684 1050.500h12v11h-13M1680.500 1053v10h8M1683 1066h6" fill="none" stroke="#fff" stroke-width="1.400" /><path d="M1691.500 1056l6 11h-12z" fill="#fbc02d" /><path d="M1691.500 1059.500v4M1691.500 1065v1.200" stroke="#222" stroke-width="1.300" />
          <path d="M1716.500 1050.500h9v15h-9zM1719 1049h4" fill="none" stroke="#fff" stroke-width="1.500" /><path d="M1718 1056h6v8h-6z" fill="#fff" />
          <path d="M1738 1053h3.500l5-5v18l-5-5h-3.500z" fill="#fff" /><path d="M1749 1053q2.500 4 0 8M1752 1050.500q4.500 6.500 0 13" fill="none" stroke="#ccc" stroke-width="1.200" />`)}
        <div class="eng">${t("ENG", 29)}</div>
        <div class="clock">${t("06:45 PM", 60)}<br />${t("18-03-2016", 76)}</div>
        <span class="gap" style="width:10px"></span>
      </div>
    </div>`;
  }

  render() {
    return html`
      ${this.deco()}${this.title()}${this.tabs()}${this.ribbon()}
      <div class="fbar">
        <div class="fbox name">${t("J47", 24)}${dd()}</div>
        ${ic(107, 182, 30, 30, svg`<path d="M121.500 192v2M121.500 196v2M121.500 200v2" stroke="#aaa" stroke-width="2" />`)}
        <div class="fbox fx">${ic(138, 183, 108, 28, svg`<path d="M149 191l13 12M162 191l-13 12" stroke="#c4c4c4" stroke-width="2.200" /><path d="M185 198l5 4.500 10-11.500" fill="none" stroke="#c4c4c4" stroke-width="3.200" /><text x="221" y="202" font-family="Liberation Serif" font-style="italic" font-weight="bold" font-size="20" fill="#666">f</text><text x="228" y="203" font-family="Liberation Serif" font-style="italic" font-weight="bold" font-size="16" fill="#666">x</text>`)}</div>
        <div class="fbox input">${ic(1895, 183, 19, 28, svg`<path d="M1899.500 194.500l4.500 4 4.500-4" fill="none" stroke="#555" stroke-width="3" />`)}</div>
      </div>
      <div class="main">
        <xl-sheet></xl-sheet>
        <div class="vscroll">
          <div class="sbtn"><svg width="9" height="5" viewBox="0 0 9 5"><path d="M0 5h9L4.500 0z" fill="#666" /></svg></div>
          <div class="vthumb"></div><div class="vtrack"></div>
          <div class="sbtn"><svg width="9" height="5" viewBox="0 0 9 5"><path d="M0 0h9L4.500 5z" fill="#666" /></svg></div>
        </div>
      </div>
      <div class="tabbar">
        <div class="nav">${ic(0, 977, 103, 28, svg`<path d="M33 986v9l-5-4.500zM57 986v9l5-4.500z" fill="#bbb" />`)}</div>
        <div class="sheettab">${t("Result_N15_139_CS_ALL", 191)}</div>
        ${ic(318, 977, 80, 28, svg`<circle cx="361" cy="991" r="9.500" fill="none" stroke="#777" stroke-width="1.300" /><path d="M356 991h10M361 986v10" stroke="#777" stroke-width="1.800" />`)}
        <div class="hscroll">
          ${ic(1143, 981, 24, 19, svg`<path d="M1150 986v2M1150 990v2M1150 994v2" stroke="#aaa" stroke-width="2" />`)}
          <div class="sbtn hbtn"><svg width="5" height="9" viewBox="0 0 5 9"><path d="M5 0v9L0 4.500z" fill="#555" /></svg></div>
          <div class="hthumb"></div><div class="htrack"></div>
          <div class="sbtn hbtn"><svg width="5" height="9" viewBox="0 0 5 9"><path d="M0 0v9l5-4.500z" fill="#555" /></svg></div>
        </div>
      </div>
      <div class="status">
        <span>${t("READY", 39)}</span>
        <div class="zoom">${ic(1582, 1005, 296, 27, svg`<path d="M1582 1005h38v27h-38z" fill="#0a6332" /><path d="M1595.500 1011.500h12v12h-12zM1595 1015.500h13M1595 1019.500h13M1599.500 1011v13M1603.500 1011v13" fill="none" stroke="#fff" stroke-width="1.200" />
          <path d="M1636.500 1011.500h13v12h-13zM1639.500 1014h7v7.500h-7zM1641 1016.500h4M1641 1019h4" fill="none" stroke="#fff" /><path d="M1677.500 1011.500h13v12h-13z" fill="none" stroke="#fff" /><path d="M1678 1012h6v8h-6zM1687 1012h3v8h-3z" fill="#fff" />
          <path d="M1710 1018h9M1853 1018h10M1858 1013v10" stroke="#fff" stroke-width="2.200" /><path d="M1723 1018.500h125" stroke="#fff" /><path d="M1783 1013h5v11h-5z" fill="#fff" />`)}<div class="pct">${t("100%", 31)}</div></div>
      </div>
      ${this.taskbar()}
      <div class="glass"></div><div class="glassline"></div>
      <div class="widget">
        <div class="info"><p>${t("All Connections", 83)}</p><p class="sp">${t("March 18, 2016", 86)}</p><p>${t("DL: 0 bytes", 63)}</p><p>${t("UL: 0 bytes", 63)}</p><p>${t("SUM: 0 bytes", 73)}</p></div>
        <div class="speeds"><div class="charts"><div></div><div class="chart"></div></div>
          <div class="rates"><span>${t("D: 0 bytes/s", 69)}</span><span class="up">${t("U: 0 bytes/s", 69)}</span></div></div>
      </div>`;
  }
}
